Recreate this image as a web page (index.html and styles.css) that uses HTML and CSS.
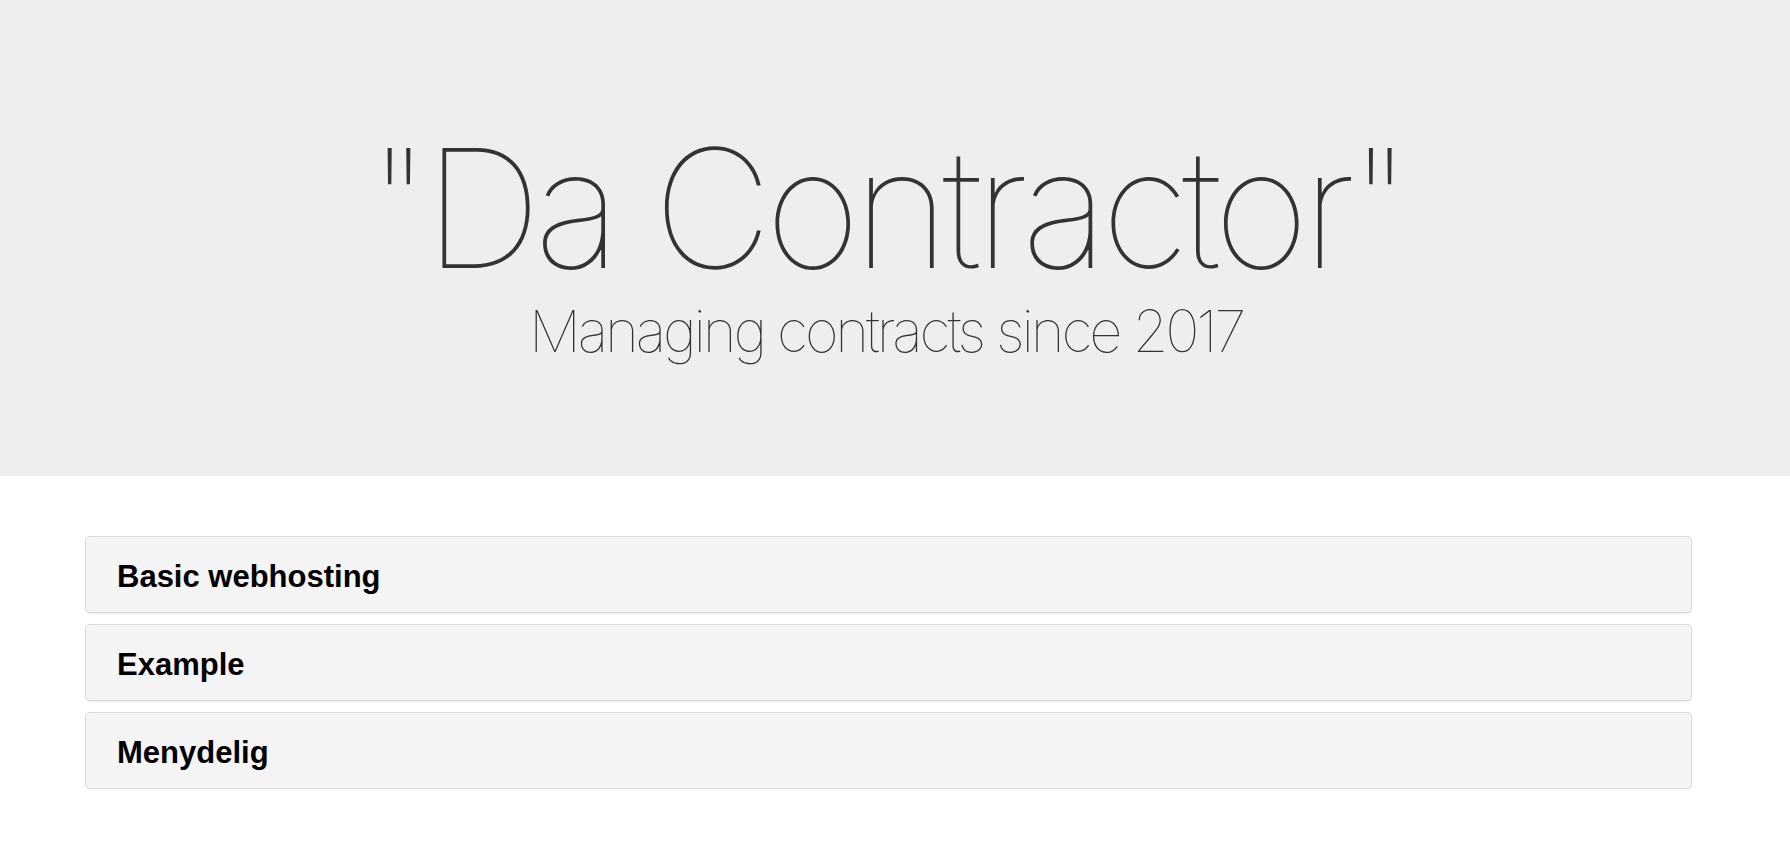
FILE: index.html
```html
<!DOCTYPE html>
<html lang="en">
<head>
<meta charset="utf-8">
<title>Da Contractor</title>
<link rel="stylesheet" href="styles.css">
</head>
<body>
<header class="jumbotron">
  <h1 class="title">"Da Contractor"</h1>
  <p class="subtitle">Managing contracts since 2017</p>
</header>
<main class="panels">
  <div class="panel"><h4 class="panel-title">Basic webhosting</h4></div>
  <div class="panel"><h4 class="panel-title">Example</h4></div>
  <div class="panel"><h4 class="panel-title">Menydelig</h4></div>
</main>
</body>
</html>
```
FILE: styles.css
```css
html, body {
  margin: 0;
  padding: 0;
  background: #fff;
}
body {
  font-family: "Liberation Sans", Arial, sans-serif;
  color: #333;
}
.jumbotron {
  background: #eeeeee;
  height: 476px;
  box-sizing: border-box;
  padding: 138px 18px 0 0;
  display: flex;
  flex-direction: column;
  align-items: center;
}
.title {
  margin: 0;
  font-family: "Inter", "Liberation Sans", sans-serif;
  font-weight: 100;
  font-size: 165px;
  line-height: 140px;
  color: #333;
  letter-spacing: -7.2px;
}
.subtitle {
  margin: 24px 0 0;
  font-family: "Inter", "Liberation Sans", sans-serif;
  font-weight: 100;
  font-size: 58px;
  line-height: 58px;
  color: #333;
  letter-spacing: -3.2px;
}
.panels {
  margin: 60px 98px 0 85px;
  display: flex;
  flex-direction: column;
  gap: 11px;
}
.panel {
  background: #f4f4f4;
  border: 1px solid #dadada;
  border-radius: 5px;
  box-shadow: 0 1px 1px rgba(0,0,0,.07);
  height: 77px;
  box-sizing: border-box;
  padding: 23px 31px 18px;
}
.panel-title {
  margin: 0;
  font-family: "Liberation Sans", Arial, sans-serif;
  font-weight: bold;
  font-size: 31px;
  line-height: 34px;
  color: #000;
}
```
